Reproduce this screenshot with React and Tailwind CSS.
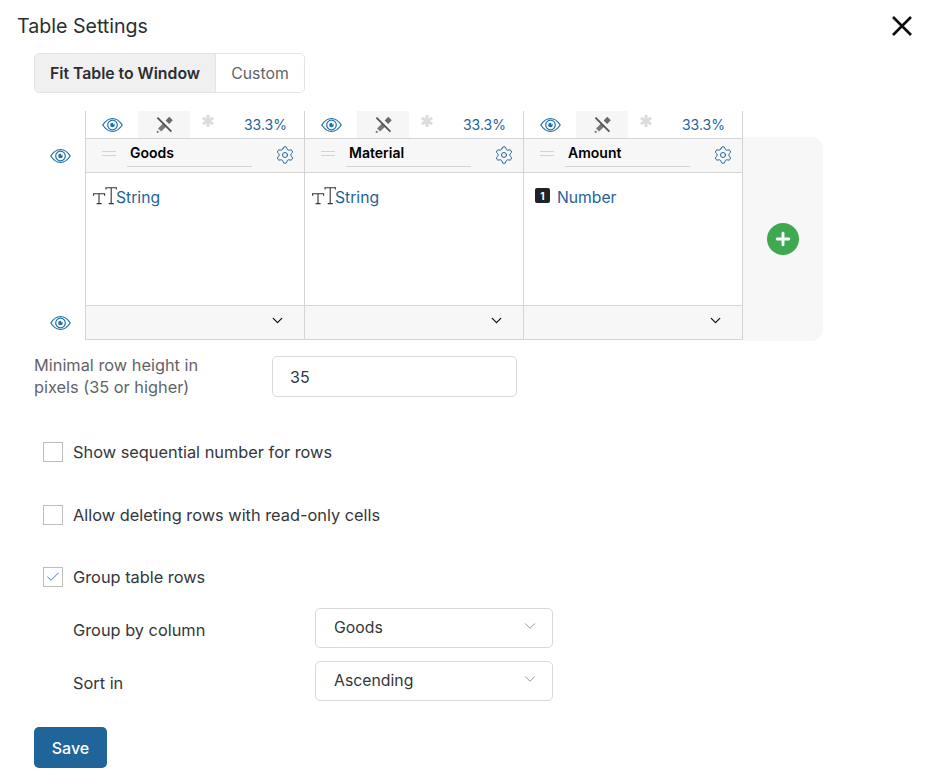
import React from "react";
import { Settings, ChevronDown, Check, Plus } from "lucide-react";

const EyeIcon = () => (
  <svg width="21" height="16" viewBox="0 0 21 16" fill="none" stroke="#1f6fa8" strokeWidth="1.2">
    <path d="M.8 8C3.6 3.6 6.9 1.5 10.5 1.5S17.4 3.6 20.2 8c-2.8 4.4-6.1 6.5-9.7 6.5S3.6 12.4.8 8Z" />
    <circle cx="10.5" cy="8" r="4.8" />
    <circle cx="10.5" cy="8" r="2.3" fill="#1f6fa8" stroke="none" />
    <circle cx="11.8" cy="6.7" r="0.8" fill="#fff" stroke="none" />
  </svg>
);

const PinIcon = () => (
  <svg width="17" height="17" viewBox="0 0 17 17" fill="none">
    <path d="M15 2.6 11.4 6.2" stroke="#6a6a6a" strokeWidth="5" />
    <path d="M9 8.6 3.6 14" stroke="#7a7a7a" strokeWidth="4.4" />
    <path d="M2.4 15.2 1 16.6" stroke="#7a7a7a" strokeWidth="2" />
    <path d="M1.4 1.6 15.4 15.6" stroke="#555" strokeWidth="1.8" />
  </svg>
);

const StarIcon = () => (
  <svg width="12" height="12" viewBox="0 0 12 12" stroke="#dcdcdc" strokeWidth="3">
    <path d="M6 0v12M.8 3l10.4 6M11.2 3 .8 9" />
  </svg>
);

const StringIcon = () => (
  <svg width="24" height="18" viewBox="0 0 24 18" fill="none" stroke="#333" strokeWidth="1.1">
    <path d="M.6 8.8V6.8h11v2M6 6.8v9.8M3.6 16.6h5" />
    <path d="M13 2.6V.8h10.4v1.8M18.2.8v15.8M15.8 16.6h5" />
  </svg>
);

const CloseIcon = () => (
  <svg width="22" height="22" viewBox="0 0 22 22" fill="none" stroke="#0d0d0d" strokeWidth="2.6">
    <path d="M2 2l18 18M20 2 2 20" />
  </svg>
);

const NumberIcon = () => (
  <span className="flex h-[15px] w-[15px] items-center justify-center rounded-[2px] bg-[#1f2328] text-[10px] leading-none font-bold text-white">
    1
  </span>
);

const columns = [
  { name: "Goods", type: "String" },
  { name: "Material", type: "String" },
  { name: "Amount", type: "Number" },
];

const Checkbox = ({ checked, label }) => (
  <div className="flex items-center pl-[9px]">
    <span className="flex h-5 w-5 items-center justify-center border border-[#bdbdbd] bg-white">
      {checked && <Check size={16} strokeWidth={1.4} color="#2f6fc0" />}
    </span>
    <span className="ml-[10px] text-[16.35px] leading-5 text-[#33373b]">{label}</span>
  </div>
);

const SelectRow = ({ label, value, className }) => (
  <div className={`flex items-center pl-[39px] ${className}`}>
    <span className="mt-[4px] w-[242px] text-[16.35px] text-[#33373b]">{label}</span>
    <div className="flex h-10 w-[238px] items-center justify-between rounded-[5px] border border-[#d9d9d9] pr-[13px] pl-[18px]">
      <span className="text-[15.8px] text-[#33373b]">{value}</span>
      <ChevronDown size={18} strokeWidth={1} color="#777" className="mb-[4px]" />
    </div>
  </div>
);

export default function App() {
  return (
    <div className="relative h-[770px] w-[948px] overflow-hidden bg-white font-['Inter',sans-serif]">
      <div className="flex h-[53px] items-start justify-between pt-[12px] pr-[35px] pl-[17px]">
        <h1 className="text-[19.6px] leading-7 font-normal text-[#2b2e31]">Table Settings</h1>
        <div className="mt-[3px]">
          <CloseIcon />
        </div>
      </div>

      <div className="pl-[34px]">
        <div className="flex h-10 w-[271px] overflow-hidden rounded-[5px] border border-[#e4e4e4]">
          <div className="flex w-[180px] items-center justify-center bg-[#f0f0f0] pt-[1px] text-[15.8px] font-semibold text-[#2b2e31]">
            Fit Table to Window
          </div>
          <div className="flex flex-1 items-center justify-center border-l border-[#e4e4e4] pt-[2px] text-[15.8px] text-[#5f6468]">
            Custom
          </div>
        </div>

        <div className="mt-[18px] flex">
          <div className="flex w-[51px] flex-col items-center">
            <div className="mt-[37px] ml-[2px]">
              <EyeIcon />
            </div>
            <div className="mt-[151px] ml-[2px]">
              <EyeIcon />
            </div>
          </div>

          <div className="flex border-b border-[#d4d4d4]">
            {columns.map((col) => (
              <div key={col.name} className="w-[219px] border-l border-[#d4d4d4] last:w-[220px] last:border-r">
                <div className="flex h-[28px] items-stretch border-b border-[#d4d4d4] text-sm text-[#1f6397]">
                  <div className="flex w-[52px] items-center justify-center pl-[1px]">
                    <EyeIcon />
                  </div>
                  <div className="flex w-[52px] items-center justify-center bg-[#f6f6f6]">
                    <PinIcon />
                  </div>
                  <div className="ml-[12px] pt-[4px]">
                    <StarIcon />
                  </div>
                  <div className="ml-auto flex items-center pr-[17px]">33.3%</div>
                </div>

                <div className="flex h-[34px] border-b border-[#d4d4d4] bg-[#f7f7f7]">
                  <div className="mt-[12px] ml-[16px] h-[5px] w-[14px] border-y border-[#d4d4d4]" />
                  <div className="ml-[11px] h-[28px] w-[125px] border-b border-[#d4d4d4] pl-[3px] text-sm leading-[27px] font-semibold text-black">
                    {col.name}
                  </div>
                  <Settings size={20} strokeWidth={1.2} color="#1f6397" className="mt-[6px] ml-[23px]" />
                </div>

                <div className="flex h-[132px] items-start pt-[15px] pl-[7px] text-[15.7px] leading-5 text-[#1f6397]">
                  {col.type === "String" ? (
                    <div className="-mt-[1px]">
                      <StringIcon />
                    </div>
                  ) : (
                    <div className="mr-[8px] ml-[4px]">
                      <NumberIcon />
                    </div>
                  )}
                  <span className="-ml-[1px]">{col.type}</span>
                </div>

                <div className="flex h-[34px] items-center justify-end border-t border-[#d4d4d4] bg-[#f7f7f7] pr-[18px]">
                  <ChevronDown size={17} strokeWidth={1.8} color="#111" className="mb-[4px]" />
                </div>
              </div>
            ))}
          </div>

          <div className="mt-[26px] -mb-[1px] flex w-[80px] items-center justify-center rounded-r-[12px] bg-[#f7f7f7]">
            <div className="flex h-8 w-8 items-center justify-center rounded-full bg-[#3fa950]">
              <Plus size={20} strokeWidth={3.4} color="#fff" />
            </div>
          </div>
        </div>

        <div className="mt-[14px] flex items-start">
          <div className="w-[238px] pr-[40px] text-[16.35px] leading-[22px] text-[#5f6468]">
            Minimal row height in pixels (35 or higher)
          </div>
          <div className="mt-[2px] flex h-[41px] w-[245px] items-center rounded-[5px] border border-[#d9d9d9] pl-[17px] text-base text-[#33373b]">
            35
          </div>
        </div>
      </div>

      <div className="mt-[44px] pl-[34px]">
        <Checkbox label="Show sequential number for rows" />
        <div className="mt-[43px]">
          <Checkbox label="Allow deleting rows with read-only cells" />
        </div>
        <div className="mt-[42px]">
          <Checkbox checked label="Group table rows" />
        </div>
      </div>

      <div className="pl-[34px]">
        <SelectRow className="mt-[21px]" label="Group by column" value="Goods" />
        <SelectRow className="mt-[13px]" label="Sort in" value="Ascending" />
        <button className="mt-[26px] flex h-[41px] w-[73px] items-center justify-center rounded-[5px] bg-[#1f6599] text-base font-medium text-white">
          Save
        </button>
      </div>
    </div>
  );
}
